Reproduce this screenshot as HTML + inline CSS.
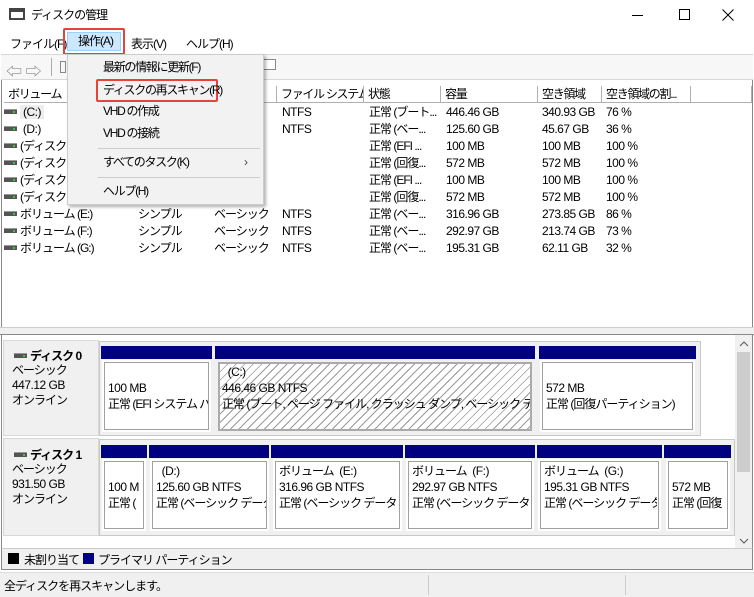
<!DOCTYPE html>
<html><head><meta charset="utf-8"><style>
*{margin:0;padding:0;box-sizing:border-box}
body{width:754px;height:597px;overflow:hidden;background:#fff;font-family:"Liberation Sans","Noto Sans CJK JP",sans-serif;font-size:12px;letter-spacing:-0.5px;color:#000;position:relative}
.a{position:absolute;white-space:nowrap}
.j{letter-spacing:-1px}
.hd{position:absolute;top:86px;height:17px;border-right:1px solid #b0b0b0;border-bottom:1px solid #b0b0b0;background:#fff;padding-left:4px;line-height:16px;overflow:hidden;white-space:nowrap;letter-spacing:-1.3px}
.row{position:absolute;left:4px;height:17px;line-height:17px;white-space:nowrap}
.drv{display:inline-block;width:13px;height:5px;background:#555;border-top:1px solid #999;vertical-align:middle;margin-right:3px;position:relative;top:-1px}
.drv::after{content:"";position:absolute;right:2px;top:1px;width:2px;height:2px;background:#3c3}
.bar{position:absolute;height:13px;background:#000080}
.pb{position:absolute;background:#fff;border:1px solid #a0a0a0;outline:2px solid #fff}
.pw{position:absolute;background:#f0f0f0;border:1px solid #c8c8c8}
.pt{position:absolute;line-height:16px;font-size:12px;white-space:nowrap;overflow:hidden}
.mi{position:absolute;left:35px;line-height:20px;letter-spacing:-1.3px}
</style></head><body>
<!-- title -->
<div class="a" style="left:9px;top:8px;width:16px;height:12px;border:2px solid #444;border-top-width:4px"></div>
<div class="a j" style="left:31px;top:6px">ディスクの管理</div>
<div class="a" style="left:632px;top:15px;width:11px;height:1px;background:#000"></div>
<div class="a" style="left:679px;top:9px;width:11px;height:11px;border:1px solid #000"></div>
<svg class="a" style="left:722px;top:9px" width="12" height="12"><path d="M0.5 0.5L11.5 11.5M11.5 0.5L0.5 11.5" stroke="#000" stroke-width="1"/></svg>
<!-- menu -->
<div class="a j" style="left:10px;top:35px">ファイル(F)</div>
<div class="a" style="left:63px;top:28px;width:62px;height:27px;border:2px solid #e8433a;border-radius:2px"><div class="j" style="position:absolute;left:2px;top:2px;right:2px;bottom:2px;background:#cce8ff;border:1px solid #99d1ff;padding-left:10px;line-height:17px">操作(A)</div></div>
<div class="a j" style="left:131px;top:35px">表示(V)</div>
<div class="a j" style="left:186px;top:35px">ヘルプ(H)</div>
<!-- toolbar -->
<div class="a" style="left:1px;top:54px;width:752px;height:26px;background:#f7f7f7;border-top:1px solid #d8d8d8;border-bottom:1px solid #d8d8d8"></div>
<div class="a" style="left:6px;top:58px;color:#888;font-size:16px">⇦ ⇨</div>
<div class="a" style="left:51px;top:58px;width:1px;height:18px;background:#aaa"></div>
<div class="a" style="left:60px;top:61px;width:6px;height:12px;border:1px solid #888"></div>
<div class="a" style="left:262px;top:59px;width:14px;height:11px;border:1px solid #888;background:#fff"></div>
<!-- list -->
<div class="a" style="left:1px;top:80px;width:752px;height:250px;background:#fff;border-left:1px solid #888;border-right:1px solid #888"></div>
<div class="hd" style="left:4px;width:130px">ボリューム</div>
<div class="hd" style="left:134px;width:76px"></div>
<div class="hd" style="left:210px;width:67px"></div>
<div class="hd" style="left:277px;width:87px">ファイル システム</div>
<div class="hd" style="left:364px;width:77px">状態</div>
<div class="hd" style="left:441px;width:97px">容量</div>
<div class="hd" style="left:538px;width:64px">空き領域</div>
<div class="hd" style="left:602px;width:89px">空き領域の割...</div>
<div class="hd" style="left:691px;width:61px"></div>
<div class="row" style="top:104px"><span class="drv"></span><span style="background:#eee;padding:0 3px">(C:)</span></div>
<div class="row" style="top:121px"><span class="drv"></span> (D:)</div>
<div class="row j" style="top:138px"><span class="drv"></span>(ディスク 0</div>
<div class="row j" style="top:155px"><span class="drv"></span>(ディスク 0</div>
<div class="row j" style="top:172px"><span class="drv"></span>(ディスク 1</div>
<div class="row j" style="top:189px"><span class="drv"></span>(ディスク 1</div>
<div class="row j" style="top:206px"><span class="drv"></span>ボリューム (E:)</div>
<div class="row j" style="top:223px"><span class="drv"></span>ボリューム (F:)</div>
<div class="row j" style="top:240px"><span class="drv"></span>ボリューム (G:)</div>
<div class="a j" style="left:138px;top:206px;line-height:17px">シンプル<br>シンプル<br>シンプル</div>
<div class="a j" style="left:214px;top:206px;line-height:17px">ベーシック<br>ベーシック<br>ベーシック</div>
<div class="a" style="left:282px;top:104px;line-height:17px">NTFS<br>NTFS<br><br><br><br><br>NTFS<br>NTFS<br>NTFS</div>
<div class="a j" style="left:369px;top:104px;line-height:17px">正常 (ブート...<br>正常 (ベー...<br>正常 (EFI ...<br>正常 (回復...<br>正常 (EFI ...<br>正常 (回復...<br>正常 (ベー...<br>正常 (ベー...<br>正常 (ベー...</div>
<div class="a" style="left:446px;top:104px;line-height:17px">446.46 GB<br>125.60 GB<br>100 MB<br>572 MB<br>100 MB<br>572 MB<br>316.96 GB<br>292.97 GB<br>195.31 GB</div>
<div class="a" style="left:542px;top:104px;line-height:17px">340.93 GB<br>45.67 GB<br>100 MB<br>572 MB<br>100 MB<br>572 MB<br>273.85 GB<br>213.74 GB<br>62.11 GB</div>
<div class="a" style="left:606px;top:104px;line-height:17px">76 %<br>36 %<br>100 %<br>100 %<br>100 %<br>100 %<br>86 %<br>73 %<br>32 %</div>
<!-- splitter -->
<div class="a" style="left:0;top:327px;width:754px;height:8px;background:#f0f0f0;border-top:1px solid #ccc;border-bottom:1px solid #888"></div>
<!-- disk area -->
<div class="a" style="left:1px;top:335px;width:752px;height:215px;background:#fff;border-left:1px solid #888;border-right:1px solid #888"></div>
<div class="a" style="left:735px;top:335px;width:17px;height:213px;background:#f0f0f0"></div>
<div class="a" style="left:737px;top:352px;width:13px;height:120px;background:#cdcdcd"></div>
<svg class="a" style="left:739px;top:340px" width="10" height="8"><path d="M1 6L5 2L9 6" fill="none" stroke="#555"/></svg>
<svg class="a" style="left:739px;top:537px" width="10" height="8"><path d="M1 2L5 6L9 2" fill="none" stroke="#555"/></svg>
<!-- disk 0 -->
<div class="pw" style="left:3px;top:340px;width:96px;height:96px;border-color:#d8d8d8"></div>
<div class="pw" style="left:99px;top:341px;width:602px;height:95px;background:#f0f0f0"></div>
<div class="a j" style="left:14px;top:347px;font-weight:bold"><span class="drv"></span>ディスク 0</div>
<div class="a" style="left:12px;top:363px;line-height:15px"><span class="j">ベーシック</span><br>447.12 GB<br><span class="j">オンライン</span></div>
<div class="bar" style="left:101px;top:346px;width:111px"></div>
<div class="bar" style="left:215px;top:346px;width:320px"></div>
<div class="bar" style="left:539px;top:346px;width:157px"></div>
<div class="pb" style="left:104px;top:362px;width:105px;height:68px"></div>
<div class="pt" style="left:108px;top:380px;width:100px">100 MB<br><span class="j">正常 (EFI システム パ</span></div>
<div class="a" style="left:218px;top:362px;width:314px;height:69px;border:2px solid #aaa;background:repeating-linear-gradient(135deg,#fff 0 5px,#999 5px 6px)"></div>
<div class="pt" style="left:222px;top:364px;width:308px">&nbsp;&nbsp;(C:)<br>446.46 GB NTFS<br><span class="j">正常 (ブート, ページ ファイル, クラッシュ ダンプ, ベーシック データ パー</span></div>
<div class="pb" style="left:542px;top:362px;width:151px;height:68px"></div>
<div class="pt" style="left:546px;top:380px">572 MB<br><span class="j">正常 (回復パーティション)</span></div>
<!-- disk 1 -->
<div class="pw" style="left:3px;top:438px;width:96px;height:98px;border-color:#d8d8d8"></div>
<div class="pw" style="left:99px;top:439px;width:636px;height:97px"></div>
<div class="a j" style="left:14px;top:446px;font-weight:bold"><span class="drv"></span>ディスク 1</div>
<div class="a" style="left:12px;top:462px;line-height:15px"><span class="j">ベーシック</span><br>931.50 GB<br><span class="j">オンライン</span></div>
<div class="bar" style="left:101px;top:445px;width:46px"></div>
<div class="bar" style="left:149px;top:445px;width:120px"></div>
<div class="bar" style="left:271px;top:445px;width:132px"></div>
<div class="bar" style="left:405px;top:445px;width:130px"></div>
<div class="bar" style="left:537px;top:445px;width:125px"></div>
<div class="bar" style="left:664px;top:445px;width:67px"></div>
<div class="pb" style="left:104px;top:461px;width:40px;height:68px"></div>
<div class="pt" style="left:108px;top:479px;width:35px">100 M<br><span class="j">正常 (</span></div>
<div class="pb" style="left:152px;top:461px;width:115px;height:68px"></div>
<div class="pt" style="left:156px;top:463px;width:110px">&nbsp;&nbsp;(D:)<br>125.60 GB NTFS<br><span class="j">正常 (ベーシック データ</span></div>
<div class="pb" style="left:275px;top:461px;width:125px;height:68px"></div>
<div class="pt" style="left:279px;top:463px;width:120px"><span class="j">ボリューム</span>&nbsp;&nbsp;(E:)<br>316.96 GB NTFS<br><span class="j">正常 (ベーシック データ パ</span></div>
<div class="pb" style="left:408px;top:461px;width:124px;height:68px"></div>
<div class="pt" style="left:412px;top:463px;width:118px"><span class="j">ボリューム</span>&nbsp;&nbsp;(F:)<br>292.97 GB NTFS<br><span class="j">正常 (ベーシック データ パ</span></div>
<div class="pb" style="left:540px;top:461px;width:119px;height:68px"></div>
<div class="pt" style="left:544px;top:463px;width:113px"><span class="j">ボリューム</span>&nbsp;&nbsp;(G:)<br>195.31 GB NTFS<br><span class="j">正常 (ベーシック データ /</span></div>
<div class="pb" style="left:668px;top:461px;width:60px;height:68px"></div>
<div class="pt" style="left:672px;top:479px;width:54px">572 MB<br><span class="j">正常 (回復</span></div>
<!-- legend -->
<div class="a" style="left:1px;top:548px;width:752px;height:22px;background:#f0f0f0;border:1px solid #888;border-top:1px solid #ccc"></div>
<div class="a" style="left:8px;top:553px;width:11px;height:11px;background:#000"></div>
<div class="a j" style="left:24px;top:551px">未割り当て</div>
<div class="a" style="left:83px;top:553px;width:11px;height:11px;background:#000080"></div>
<div class="a j" style="left:98px;top:551px">プライマリ パーティション</div>
<!-- status -->
<div class="a" style="left:0;top:572px;width:754px;height:25px;background:#f0f0f0;border-top:1px solid #ddd"></div>
<div class="a" style="left:428px;top:575px;width:1px;height:20px;background:#ccc"></div>
<div class="a" style="left:625px;top:575px;width:1px;height:20px;background:#ccc"></div>
<div class="a j" style="left:4px;top:577px">全ディスクを再スキャンします。</div>
<!-- dropdown -->
<div class="a" style="left:67px;top:54px;width:197px;height:151px;background:#f2f2f2;border:1px solid #ccc;box-shadow:2px 2px 3px rgba(0,0,0,.3)">
<div class="mi" style="top:2px">最新の情報に更新(F)</div>
<div class="a" style="left:28px;top:24px;width:122px;height:23px;border:2px solid #e8433a;border-radius:2px"></div>
<div class="mi" style="top:25px">ディスクの再スキャン(R)</div>
<div class="mi" style="top:46px">VHD の作成</div>
<div class="mi" style="top:68px">VHD の接続</div>
<div class="a" style="left:30px;top:93px;width:162px;height:1px;background:#ccc"></div>
<div class="mi" style="top:97px">すべてのタスク(K)</div>
<div class="a" style="left:176px;top:97px;line-height:20px;color:#444">›</div>
<div class="a" style="left:30px;top:122px;width:162px;height:1px;background:#ccc"></div>
<div class="mi" style="top:126px">ヘルプ(H)</div>
</div>
</body></html>
